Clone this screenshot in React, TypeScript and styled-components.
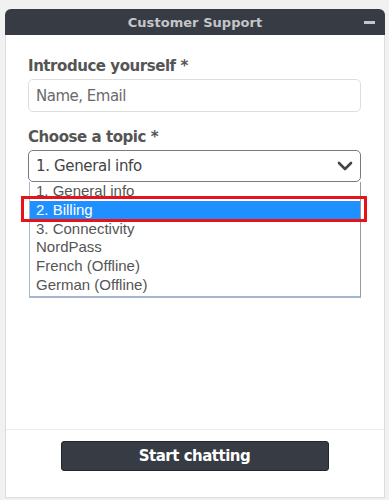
import React from "react";
import styled, { createGlobalStyle } from "styled-components";

const Global = createGlobalStyle`
  html, body { margin: 0; padding: 0; }
  body {
    background: #f1f1f1;
    font-family: "DejaVu Sans", Verdana, sans-serif;
    height: 500px;
    overflow: hidden;
  }
`;

const Widget = styled.div`
  position: relative;
  box-sizing: border-box;
  margin: 9px 4px 0 5px;
  width: 380px;
  height: 489px;
  background: #fff;
  border: 1px solid #dcdcdc;
  border-top: none;
  border-radius: 6px 6px 0 0;
  display: flex;
  flex-direction: column;
`;

const Header = styled.div`
  height: 26px;
  background: #373b44;
  border-radius: 6px 6px 0 0;
  margin: 0 -1px;
  display: flex;
  align-items: center;
  justify-content: center;
  position: relative;
`;

const Title = styled.div`
  color: #c4c6c9;
  font-weight: bold;
  font-size: 13px;
  letter-spacing: 0.05px;
`;

const Minimize = styled.div`
  position: absolute;
  right: 10px;
  top: 12px;
  width: 11px;
  height: 3px;
  background: #c4c6c9;
`;

const Body = styled.div`
  flex: 1;
  padding: 22px 23px 0 22px;
  display: flex;
  flex-direction: column;
  position: relative;
`;

const Label = styled.div<{ $top?: number }>`
  color: #555;
  font-weight: bold;
  font-size: 15px;
  line-height: 18px;
  letter-spacing: -0.45px;
  margin-top: ${(p) => p.$top ?? 0}px;
  margin-bottom: 4px;
`;

const Input = styled.div`
  box-sizing: border-box;
  height: 33px;
  border: 1px solid #dedede;
  border-radius: 5px;
  padding: 0 7px;
  display: flex;
  align-items: center;
  color: #6a6a6a;
  font-size: 15px;
  letter-spacing: -0.5px;
`;

const SelectWrap = styled.div`
  position: relative;
`;

const Select = styled.div`
  box-sizing: border-box;
  height: 32px;
  border: 1px solid #7a7a7a;
  border-radius: 5px;
  padding: 0 7px;
  display: flex;
  align-items: center;
  justify-content: space-between;
  color: #444;
  font-size: 15px;
  letter-spacing: -0.35px;
`;

const Chevron = styled.svg`
  width: 16px;
  height: 12px;
`;

const List = styled.div`
  position: absolute;
  left: 1px;
  right: 0;
  top: 32px;
  box-sizing: border-box;
  background: #fff;
  border-left: 1px solid #a5b6d0;
  border-bottom: 2px solid #a5b6d0;
  border-right: 1px solid #9a9a9a;
  padding-bottom: 1px;
  font-family: "Liberation Sans", Arial, sans-serif;
  font-size: 15px;
  z-index: 2;
`;

const Option = styled.div<{ $active?: boolean }>`
  height: 18.8px;
  line-height: 18px;
  padding-left: 6px;
  color: ${(p) => (p.$active ? "#fff" : "#555")};
  background: ${(p) => (p.$active ? "#1e90ff" : "transparent")};
`;

const Highlight = styled.div`
  position: absolute;
  left: -7px;
  right: -6px;
  top: 46px;
  height: 26px;
  box-sizing: border-box;
  border: 3px solid #e8121a;
  z-index: 3;
  pointer-events: none;
`;

const Footer = styled.div`
  height: 68px;
  border-top: 1px solid #ededed;
  display: flex;
  justify-content: center;
  padding-top: 11px;
  box-sizing: border-box;
`;

const Button = styled.div`
  box-sizing: border-box;
  width: 268px;
  height: 30px;
  background: #373b44;
  border: 1px solid #23262c;
  border-radius: 3px;
  color: #fff;
  font-weight: bold;
  font-size: 15px;
  letter-spacing: -0.5px;
  display: flex;
  align-items: center;
  justify-content: center;
  margin-left: -1px;
`;

const options = [
  "1. General info",
  "2. Billing",
  "3. Connectivity",
  "NordPass",
  "French (Offline)",
  "German (Offline)",
];

export default function App() {
  return (
    <>
      <Global />
      <Widget>
        <Header>
          <Title>Customer Support</Title>
          <Minimize />
        </Header>
        <Body>
          <Label>Introduce yourself *</Label>
          <Input>Name, Email</Input>
          <Label $top={16}>Choose a topic *</Label>
          <SelectWrap>
            <Select>
              <span>1. General info</span>
              <Chevron viewBox="0 0 16 12">
                <path d="M2 3 L8 9 L14 3" fill="none" stroke="#444" strokeWidth="2.6" strokeLinecap="round" strokeLinejoin="round" />
              </Chevron>
            </Select>
            <List>
              {options.map((o, i) => (
                <Option key={o} $active={i === 1}>{o}</Option>
              ))}
            </List>
            <Highlight />
          </SelectWrap>
        </Body>
        <Footer>
          <Button>Start chatting</Button>
        </Footer>
      </Widget>
    </>
  );
}
